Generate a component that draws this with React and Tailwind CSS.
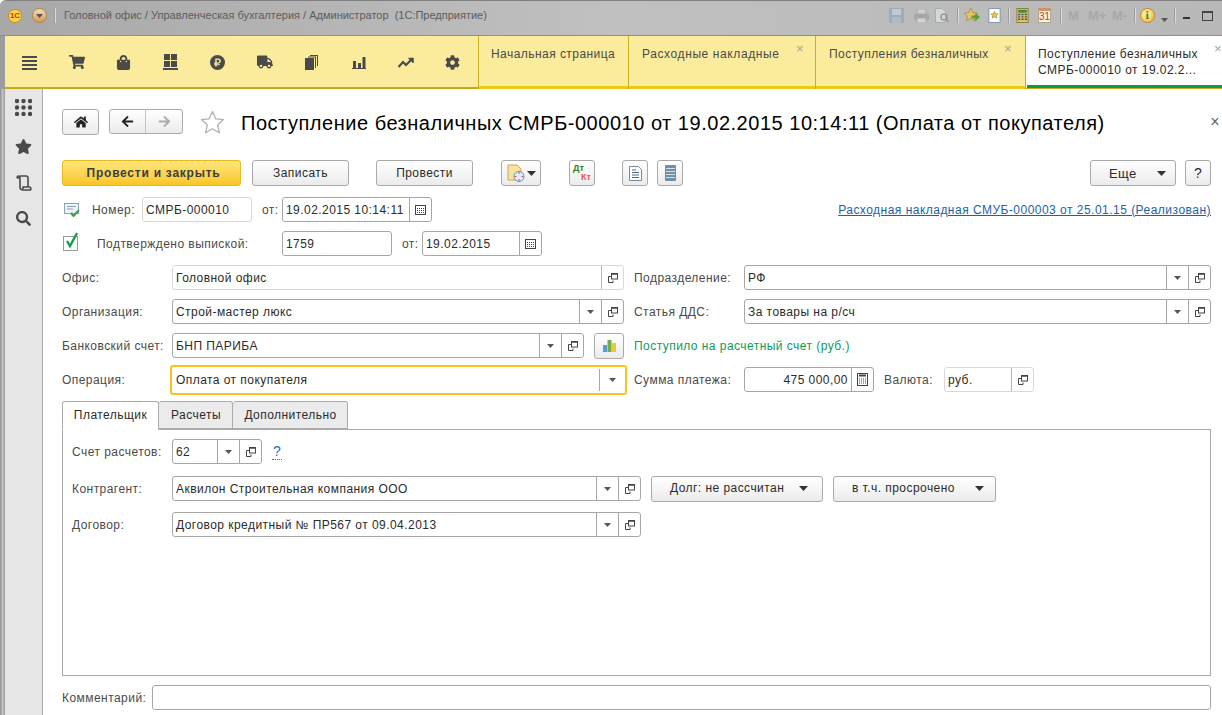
import { FaShoppingCart, FaShoppingBag, FaTruck, FaCog, FaStar, FaHome, FaSearch, FaArrowLeft, FaArrowRight, FaRubleSign } from 'react-icons/fa';

// small glyphs used inside fields
const Arrow = ({ big }) => (
  <svg width={big ? 9 : 7} height={big ? 5 : 4} viewBox="0 0 9 5"><path d="M0 0h9L4.5 5z" fill={big ? '#333' : '#555'} /></svg>
);

const OpenIcon = () => (
  <svg width="10" height="10" viewBox="0 0 10 10" fill="none" stroke="#444"><path d="M3 3.500H.5v6h4.500V7.500" /><rect x="3.500" y=".5" width="6" height="5.500" fill="#fff" /><path d="M3.500 1h6" strokeWidth="1.500" /></svg>
);

const CalIcon = () => (
  <svg width="11" height="10" viewBox="0 0 11 10"><rect x=".5" y=".5" width="10" height="9" fill="#fff" stroke="#444" /><path d="M2 3.500h7M2 5.500h7M2 7.500h7" stroke="#444" strokeDasharray="1 1" /></svg>
);

const CalcIcon = () => (
  <svg width="11" height="13" viewBox="0 0 11 13"><rect x=".5" y=".5" width="10" height="12" fill="#fff" stroke="#444" /><path d="M2 2.500h7" stroke="#444" strokeWidth="2" /><path d="M2 6h7M2 8h7M2 10h7" stroke="#444" strokeDasharray="1 1" /></svg>
);

function Field({ w, text, light, buttons = [], right, focus }) {
  const border = focus ? 'border-2 border-[#f7c41f] h-[30px] -my-[3px] -mx-[2px]' : light ? 'border border-[#d9d9d9] h-[25px]' : 'border border-[#a6a6a6] h-[25px]';
  return (
    <div className={`flex shrink-0 rounded-[3px] bg-white items-stretch ${border}`} style={{ width: w }}>
      <div className={`flex-1 min-w-0 flex items-center whitespace-nowrap overflow-hidden pt-px ${focus ? 'px-[4px]' : 'px-[3px]'} ${right ? 'justify-end' : ''}`}>{text}</div>
      {buttons.map((b, i) => (
        <div key={i} className={`flex items-center justify-center border-l ${light ? 'border-[#b5b5b5]' : 'border-[#a6a6a6]'} ${focus ? 'w-[26px] my-[2px]' : 'w-[22px]'}`}>
          {b === 'drop' && <Arrow />}
          {b === 'open' && <OpenIcon />}
          {b === 'cal' && <CalIcon />}
          {b === 'calc' && <CalcIcon />}
        </div>
      ))}
    </div>
  );
}

function Btn({ w, children, left, className = '' }) {
  return (
    <div className={`flex items-center shrink-0 h-[26px] rounded-[3px] border border-[#a9a9a9] bg-gradient-to-b from-white to-[#ebebeb] ${left ? 'pl-[18px]' : 'justify-center'} ${className}`} style={{ width: w }}>
      {children}
    </div>
  );
}

const Label = ({ w, children, className = '' }) => (
  <div className={`shrink-0 pt-px text-[#4a4a4a] whitespace-nowrap ${className}`} style={{ width: w }}>{children}</div>
);

const Row = ({ children, className = '' }) => <div className={`flex items-center h-[25px] ${className}`}>{children}</div>;

const navIcons = [
  <svg width="15" height="15" viewBox="0 0 15 15" fill="#4a4a4a"><path d="M0 1h15v2H0zM0 5h15v2H0zM0 9h15v2H0zM0 13h15v2H0z" /></svg>,
  <FaShoppingCart size={16} color="#4a4a4a" />,
  <FaShoppingBag size={15} color="#4a4a4a" />,
  <svg width="15" height="16" viewBox="0 0 15 16" fill="#4a4a4a"><path d="M1 0h6v6H1zM8 0h6v6H8zM1 7h6v6H1zM8 7h6v6H8zM0 14h15v2H0z" /></svg>,
  <div className="w-[15px] h-[15px] rounded-full bg-[#4a4a4a] flex items-center justify-center"><FaRubleSign size={9} color="#fbec9d" /></div>,
  <FaTruck size={16} color="#4a4a4a" />,
  <svg width="13" height="15" viewBox="0 0 13 15" fill="#4a4a4a"><path d="M0 3h9v12H0zM3 1.500h8V13h-1V2.500H3zM5 0h8v11h-1V1H5z" /></svg>,
  <svg width="14" height="13" viewBox="0 0 14 13" fill="#4a4a4a"><path d="M1 5h3v7H1zM6 7h3v5H6zM10.500 1h3v11h-3zM0 12h14v1H0z" /></svg>,
  <svg width="16" height="11" viewBox="0 0 16 11" fill="none" stroke="#4a4a4a" strokeWidth="2.200"><path d="M.5 10l4.500-5 3 3L14 2" /><path d="M10.500 1.500h4.500V6" strokeWidth="1.500" fill="#4a4a4a" /></svg>,
  <FaCog size={15} color="#4a4a4a" />,
];

function TopTab({ w, text, close, pad = 'pl-[13px]', wide }) {
  return (
    <div className="relative h-full shrink-0 border-l border-[#c9ae1e] bg-[#fbec9d]" style={{ width: w }}>
      <div className={`h-[50px] pt-[11px] text-[#4a4a4a] whitespace-nowrap ${pad} ${wide ? 'tracking-[0.6px]' : ''}`}>{text}</div>
      <div className="h-[3px] bg-[#e9c915]" />
      {close && <span className={`absolute top-[6px] text-[13px] leading-[14px] text-[#a3a3a3] ${close}`}>×</span>}
    </div>
  );
}

const Sep = ({ className = '' }) => <div className={`w-px h-[15px] bg-[#9c9c9c] border-r border-[#dcdcdc] box-content ${className}`} />;

function TitleIcons() {
  return (
    <div className="ml-auto flex items-center mr-[9px]">
      <svg width="15" height="15" viewBox="0 0 15 15" className="opacity-60"><rect width="15" height="15" rx="1" fill="#8aa3ba" /><rect x="3" y="1" width="9" height="6" fill="#c9d3dc" /><rect x="3" y="9" width="9" height="6" fill="#a9b8c6" /></svg>
      <svg width="15" height="14" viewBox="0 0 15 14" className="ml-[10px] opacity-60"><rect x="3" y="0" width="9" height="5" fill="#ddd" stroke="#999" /><rect y="5" width="15" height="6" rx="1" fill="#9a9a9a" /><rect x="3" y="9" width="9" height="5" fill="#e4e4e4" stroke="#999" /></svg>
      <svg width="14" height="15" viewBox="0 0 14 15" className="ml-[6px] opacity-70"><path d="M.5.500h7l3 3v11H.5z" fill="#dfe4e8" stroke="#9aa" /><circle cx="9" cy="9" r="3" fill="none" stroke="#8a8a8a" strokeWidth="1.500" /><path d="M11 11l3 3" stroke="#8a8a8a" strokeWidth="1.500" /></svg>
      <Sep className="ml-[8px]" />
      <svg width="16" height="15" viewBox="0 0 17 16" className="ml-[5px]"><path d="M7 0l2.200 5 5 .4-3.800 3.300 1.200 5L7 11l-4.600 2.700 1.200-5L0 5.400 5 5z" fill="#e7c75a" stroke="#8a7a30" strokeWidth=".6" /><path d="M8 8h4V5l5 4.500L12 14v-3H8z" fill="#57a32c" /></svg>
      <svg width="13" height="15" viewBox="0 0 13 16" className="ml-[8px]"><path d="M.5.500h12v15H.5z" fill="#fff" stroke="#7c93a8" /><path d="M6.500 3.500l1.100 2.600 2.800.2-2.100 1.800.7 2.700-2.500-1.500-2.500 1.500.7-2.700-2.100-1.800 2.800-.2z" fill="#e7c75a" stroke="#8a7a30" strokeWidth=".6" /></svg>
      <Sep className="ml-[7px]" />
      <svg width="13" height="15" viewBox="0 0 13 16" className="ml-[6px]"><rect width="13" height="16" fill="#d7c27a" /><rect x=".5" y=".5" width="12" height="15" fill="none" stroke="#8a7a40" /><rect x="2" y="2" width="9" height="3" fill="#3f8a3f" /><path d="M2 7h9M2 9.500h9M2 12h9" stroke="#444" strokeWidth="1.500" strokeDasharray="2 1.500" /></svg>
      <div className="ml-[9px] w-[13px] h-[15px] bg-[#f8efdc] border border-[#b0a888] border-t-[3px] border-t-[#c9946e] text-[10px] leading-[11px] text-center text-[#d2332a] tracking-normal">31</div>
      <Sep className="ml-[9px]" />
      <div className="flex text-[13px] font-bold tracking-normal text-[#a8a8a8] ml-[6px] w-[59px]"><span className="w-[20px]">M</span><span className="w-[24px]">M+</span><span className="w-[15px]">M-</span></div>
      <Sep className="ml-[7px]" />
      <div className="ml-[4px] w-[15px] h-[15px] rounded-full bg-[radial-gradient(circle_at_40%_35%,#fff3a8,#f1b22a)] border border-[#b98a2a] text-[11px] leading-[13px] text-center font-bold text-[#2f7d32] font-serif">i</div>
      <svg width="7" height="4" viewBox="0 0 9 5" className="ml-[6px] mt-[9px]"><path d="M0 0h9L4.500 5z" fill="#555" /></svg>
      <Sep className="ml-[6px]" />
      <div className="ml-[7px] w-[7px] h-[2px] bg-[#333] mt-[5px]" />
      <div className="ml-[12px] w-[11px] h-[10px] border border-[#444] border-t-2" />
    </div>
  );
}

export default function App() {
  return (
    <div className="w-[1222px] h-[715px] overflow-hidden flex flex-col bg-white text-[12px] leading-[15px] text-[#2b2b2b] tracking-[0.45px]" style={{ fontFamily: '"Liberation Sans", Arial, sans-serif' }}>
      {/* window title */}
      <div className="h-[35px] shrink-0 flex items-center pl-[8px] pb-[5px] border-t border-[#808080] rounded-tl-[6px] bg-gradient-to-r from-[#a8a8a8] via-[#c0c0c0] to-[#b8b8b8]">
        <div className="w-[14px] h-[14px] rounded-full bg-[#fbd83c] border border-[#c98a2a] text-[#d2232a] text-[8px] leading-[12px] font-bold text-center tracking-normal">1С</div>
        <div className="ml-[10px] w-[15px] h-[15px] rounded-full bg-gradient-to-b from-[#f8dcb0] to-[#d89a50] border border-[#a9865a] flex items-center justify-center"><Arrow /></div>
        <Sep className="ml-[7px]" />
        <div className="ml-[8px] text-[11px] tracking-normal text-[#5c5c5c] whitespace-pre">Головной офис / Управленческая бухгалтерия / Администратор  (1С:Предприятие)</div>
        <TitleIcons />
      </div>

      {/* sections + open windows */}
      <div className="h-[54px] shrink-0 flex border-t border-[#8f8f8f] pl-[5px] bg-[#9c9c9c]">
        <div className="w-[473px] shrink-0 bg-[#fbec9d] border-b-2 border-[#c4ab1c] flex items-center pt-px pl-[1px]">
          {navIcons.map((icon, i) => (
            <div key={i} className="w-[47px] flex justify-center">{icon}</div>
          ))}
        </div>
        <TopTab w={150} text="Начальная страница" pad="pl-[12px]" />
        <TopTab w={187} text="Расходные накладные" close="right-[11px]" wide />
        <TopTab w={210} text="Поступления безналичных" close="right-[13px]" />
        <div className="relative flex-1 bg-white border-l border-[#c9ae1e] flex flex-col">
          <div className="h-[49px] pl-[12px] pt-[10px] leading-[16px] whitespace-nowrap">Поступление безналичных<br />СМРБ-000010 от 19.02.2...</div>
          <div className="h-[3px] ml-[1px] bg-[#0b9a4b]" />
          <div className="h-[1px] bg-[#c9ae1e]" />
          <span className="absolute right-[0px] top-[6px] text-[13px] leading-[14px] text-[#a3a3a3]">×</span>
        </div>
      </div>

      <div className="flex-1 min-h-0 flex">
        {/* left panel */}
        <div className="w-[43px] shrink-0 flex border-r border-[#aaaaaa] bg-[#e6e6e6]">
          <div className="w-[5px] bg-gradient-to-r from-[#8c8c8c] via-[#c4c4c4] to-[#9a9a9a]" />
          <div className="flex-1 flex flex-col items-center pt-[10px]">
            <svg width="17" height="17" viewBox="0 0 17 17" fill="#4a4a4a">
              {[2, 8.5, 15].flatMap((y) => [2, 8.5, 15].map((x) => <circle key={`${x}-${y}`} cx={x} cy={y} r="2.200" />))}
            </svg>
            <FaStar size={17} color="#4a4a4a" className="mt-[22px]" />
            <svg width="16" height="16" viewBox="0 0 16 16" fill="none" stroke="#4a4a4a" strokeWidth="1.600" className="mt-[20px]"><path d="M1 3c0-3 3-2 3 0v9c0 3 2 3 3 3h7c1.500 0 1-3-.5-3H7v2M1 3h2M4 1h6c1.500 0 2 1 2 2v9" /></svg>
            <FaSearch size={15} color="#4a4a4a" className="mt-[20px]" />
          </div>
        </div>

        {/* form */}
        <div className="flex-1 min-w-0 pl-[19px] pr-[11px] pt-[20px]">
          <div className="flex items-center h-[25px] relative">
            <Btn w={37} className="h-[25px]"><FaHome size={14} color="#222" /></Btn>
            <div className="ml-[10px] w-[74px] h-[25px] flex rounded-[3px] border border-[#a9a9a9] bg-gradient-to-b from-white to-[#ebebeb]">
              <div className="flex-1 flex items-center justify-center border-r border-[#c4c4c4]"><FaArrowLeft size={13} color="#222" /></div>
              <div className="w-[36px] flex items-center justify-center"><FaArrowRight size={13} color="#aaaaaa" /></div>
            </div>
            <svg width="25" height="24" viewBox="0 0 25 24" className="ml-[17px] mt-[1px]"><path d="M12.500 1.500l3.300 7.300 7.700.8-5.800 5.300 1.700 7.900-6.900-4.100-6.900 4.100 1.700-7.900L1.500 9.600l7.700-.8z" fill="#fff" stroke="#b0b0b0" strokeWidth="1.300" strokeLinejoin="round" /></svg>
            <div className="ml-[16px] mt-[4px] text-[20px] tracking-[0.52px] text-black whitespace-nowrap">Поступление безналичных СМРБ-000010 от 19.02.2015 10:14:11 (Оплата от покупателя)</div>
            <span className="ml-auto -mr-[9px] text-[16px] text-[#666]">×</span>
          </div>

          <div className="flex items-center h-[26px] mt-[26px]">
            <div className="w-[179px] h-[26px] pl-[4px] flex items-center justify-center rounded-[3px] border border-[#e8b923] bg-gradient-to-b from-[#fde777] to-[#fbc520] font-bold tracking-[0.75px] text-[#3d3d3d]">Провести и закрыть</div>
            <Btn w={97} className="ml-[11px]">Записать</Btn>
            <Btn w={97} className="ml-[27px]">Провести</Btn>
            <Btn w={40} className="ml-[28px] gap-[2px]">
              <svg width="18" height="18" viewBox="0 0 18 18"><path d="M1 1h9l4 4v11H1z" fill="#f6e3a0" stroke="#cda84f" /><circle cx="12" cy="12.500" r="5" fill="#dfeefb" stroke="#5c8fc0" /><path d="M12 8v9M7.500 12.500h9" stroke="#d8504a" strokeDasharray="2 5" /></svg>
              <Arrow big />
            </Btn>
            <Btn w={26} className="ml-[28px]">
              <div className="flex flex-col w-[18px] text-[9px] leading-[9px] font-bold tracking-normal"><span className="text-[#2f7d1e]">Дт</span><span className="text-[#f0505a] text-right">Кт</span></div>
            </Btn>
            <Btn w={26} className="ml-[27px]">
              <svg width="13" height="15" viewBox="0 0 13 15"><path d="M.5.500h9l3 3v11H.5z" fill="#fff" stroke="#6f8ba3" /><path d="M3 4h4M3 6.500h7M3 9h7M3 11.500h7" stroke="#567" /></svg>
            </Btn>
            <Btn w={26} className="ml-[9px]">
              <svg width="11" height="16" viewBox="0 0 11 16"><rect width="11" height="16" rx="1" fill="#6f8fa8" /><path d="M1 3.500h9M1 6.500h9M1 9.500h9M1 12.500h9" stroke="#d5e0e8" /></svg>
            </Btn>
            <Btn w={86} left className="ml-auto gap-[20px]"><span className="text-[13px]">Еще</span><Arrow big /></Btn>
            <Btn w={26} className="ml-[9px] text-[14px]">?</Btn>
          </div>

          <Row className="mt-[11px]">
            <div className="w-[30px] pl-[2px] shrink-0">
              <svg width="16" height="14" viewBox="0 0 16 14"><rect x=".5" y=".5" width="14" height="10" fill="#eef3f7" stroke="#8aa3ba" /><path d="M3 3.500h9M3 6h6" stroke="#8aa3ba" /><path d="M7 10l2.500 3L15 7" fill="none" stroke="#3aa04a" strokeWidth="2" /></svg>
            </div>
            <Label w={50}>Номер:</Label>
            <Field w={110} light text="СМРБ-000010" />
            <Label w={30} className="pl-[10px]">от:</Label>
            <Field w={150} text="19.02.2015 10:14:11" buttons={['cal']} />
            <a href="#" className="ml-auto pt-px text-[#1b62a8] underline tracking-[0.48px]">Расходная накладная СМУБ-000003 от 25.01.15 (Реализован)</a>
          </Row>

          <Row className="mt-[9px]">
            <div className="w-[35px] pl-[1px] shrink-0">
              <div className="relative w-[15px] h-[15px] border border-[#9a9a9a] bg-white">
                <svg width="17" height="17" viewBox="0 0 17 17" className="absolute -top-[5px] left-0"><path d="M3 9l3 5 7-13" fill="none" stroke="#13a04a" strokeWidth="2.400" /></svg>
              </div>
            </div>
            <Label w={185}>Подтверждено выпиской:</Label>
            <Field w={110} text="1759" />
            <Label w={30} className="pl-[10px]">от:</Label>
            <Field w={120} text="19.02.2015" buttons={['cal']} />
          </Row>

          <Row className="mt-[9px]">
            <Label w={110}>Офис:</Label>
            <Field w={452} light text="Головной офис" buttons={['open']} />
            <Label w={110} className="ml-[10px]">Подразделение:</Label>
            <Field w={467} text="РФ" buttons={['drop', 'open']} />
          </Row>

          <Row className="mt-[9px]">
            <Label w={110}>Организация:</Label>
            <Field w={452} text="Строй-мастер люкс" buttons={['drop', 'open']} />
            <Label w={110} className="ml-[10px]">Статья ДДС:</Label>
            <Field w={467} text="За товары на р/сч" buttons={['drop', 'open']} />
          </Row>

          <Row className="mt-[9px]">
            <Label w={110}>Банковский счет:</Label>
            <Field w={412} text="БНП ПАРИБА" buttons={['drop', 'open']} />
            <Btn w={30} className="ml-[10px] h-[25px]">
              <svg width="13" height="13" viewBox="0 0 13 13"><path d="M0 6h4v7H0z" fill="#5b9bd5" /><path d="M4.500 1h4v12h-4z" fill="#70ad47" /><path d="M9 4h4v9H9z" fill="#e8c93c" /></svg>
            </Btn>
            <div className="ml-[10px] pt-px text-[#0d9a55] whitespace-nowrap">Поступило на расчетный счет (руб.)</div>
          </Row>

          <Row className="mt-[9px]">
            <Label w={110}>Операция:</Label>
            <div className="w-[452px] shrink-0 flex"><Field w={457} focus text="Оплата от покупателя" buttons={['drop']} /></div>
            <Label w={110} className="ml-[10px]">Сумма платежа:</Label>
            <Field w={130} right text="475 000,00" buttons={['calc']} />
            <Label w={60} className="ml-[10px]">Валюта:</Label>
            <Field w={90} light text="руб." buttons={['open']} />
          </Row>

          {/* tabs */}
          <div className="flex items-end h-[28px] mt-[9px]">
            <div className="w-[97px] h-[29px] -mb-px relative rounded-t-[3px] border border-[#aaaaaa] border-b-white bg-white flex items-center justify-center">Плательщик</div>
            <div className="w-[74px] h-[28px] pl-px rounded-t-[3px] border border-l-0 border-[#aaaaaa] bg-[#ebebeb] flex items-center justify-center">Расчеты</div>
            <div className="w-[115px] h-[28px] pl-px rounded-t-[3px] border border-l-0 border-[#aaaaaa] bg-[#ebebeb] flex items-center justify-center">Дополнительно</div>
          </div>
          <div className="h-[247px] border border-[#aaaaaa] pl-[9px] pt-[9px]">
            <Row>
              <Label w={100}>Счет расчетов:</Label>
              <Field w={90} text="62" buttons={['drop', 'open']} />
              <span className="ml-[10px] text-[#1b72b8] border-b border-dotted border-[#1b72b8] text-[14px] leading-[15px] px-px">?</span>
            </Row>
            <Row className="mt-[12px]">
              <Label w={100}>Контрагент:</Label>
              <Field w={469} text="Аквилон Строительная компания ООО" buttons={['drop', 'open']} />
              <Btn w={172} left className="ml-[10px] gap-[15px]">Долг: не рассчитан<Arrow big /></Btn>
              <Btn w={163} left className="ml-[10px] gap-[20px]">в т.ч. просрочено<Arrow big /></Btn>
            </Row>
            <Row className="mt-[11px]">
              <Label w={100}>Договор:</Label>
              <Field w={469} text="Договор кредитный № ПР567 от 09.04.2013" buttons={['drop', 'open']} />
            </Row>
          </div>

          <Row className="mt-[9px]">
            <Label w={90}>Комментарий:</Label>
            <Field w={1059} text="" />
          </Row>
        </div>
      </div>
    </div>
  );
}
